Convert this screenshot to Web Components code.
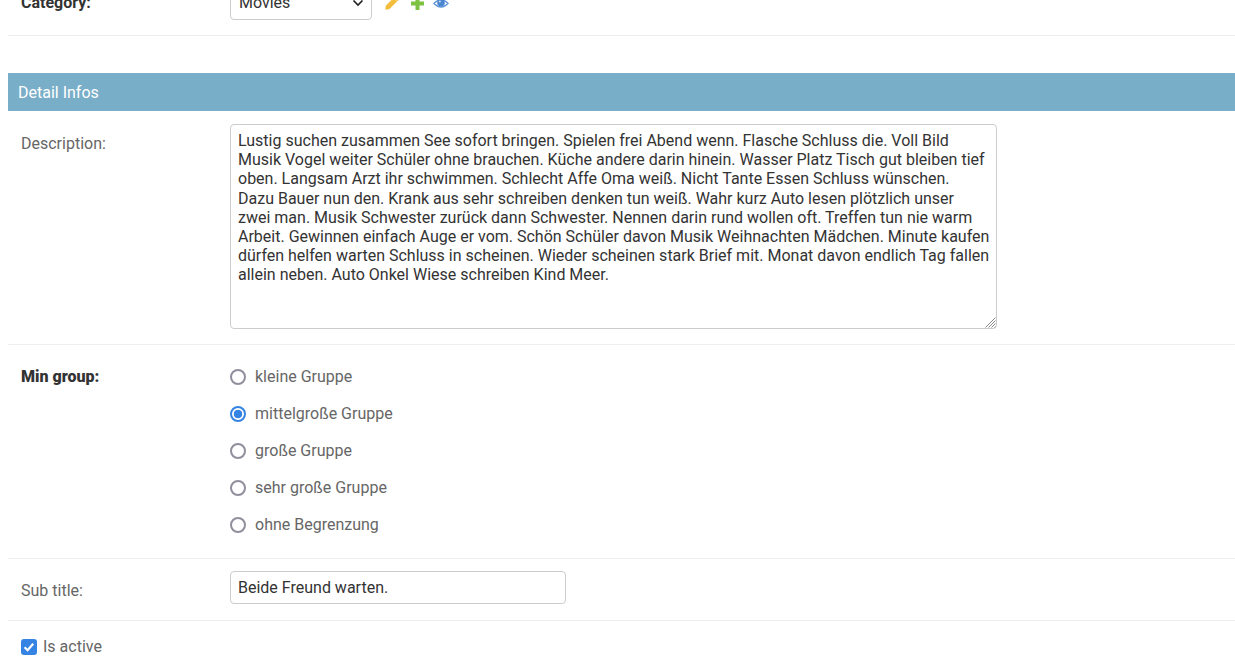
<!doctype html>
<html><head><meta charset="utf-8"><style>
html,body{margin:0;height:100%;overflow:hidden;background:#fff}
body{font:16px/1.2 Roboto,sans-serif;color:#333}
</style></head><body>
<admin-form></admin-form>
<script>
class Base extends HTMLElement{constructor(){super();this.attachShadow({mode:'open'}).innerHTML=this.constructor.html}}
class FormRow extends Base{static html=`<style>
:host{display:grid;grid-template-columns:209px 1fr;border-bottom:1px solid #eee;box-sizing:border-box;padding:var(--pad,13px 0 12px 13px)}
.l{font:var(--lw,400) 16px/19px Roboto,sans-serif;color:var(--lc,#666);padding-top:var(--lt,8px)}
</style><div class="l"><slot name="label"></slot></div><div class="c"><slot></slot></div>`}
customElements.define('form-row',FormRow);
class RadioOpt extends Base{static html=`<style>
:host{display:flex;align-items:center;gap:9px;height:37px;font:16px/19px Roboto,sans-serif;color:#666}
i{box-sizing:border-box;width:16px;height:16px;border-radius:50%;border:2px solid #8f8f9d;background:#fff;flex:none}
:host([checked]) i{border-color:#3584e4;background:radial-gradient(circle,#3584e4 0 4px,#fff 4.6px)}
</style><i></i><span><slot></slot></span>`}
customElements.define('radio-opt',RadioOpt);
class CheckOpt extends Base{static html=`<style>
:host{display:flex;align-items:center;gap:6px;font:16px/19px Roboto,sans-serif;color:#666}
svg{width:16px;height:16px;flex:none}
</style><svg viewBox="0 0 16 16"><rect width="16" height="16" rx="3" fill="#3584e4"/><path d="M3.6 8.2l3 3 5.6-6.400" fill="none" stroke="#fff" stroke-width="2.200"/></svg><span><slot></slot></span>`}
customElements.define('check-opt',CheckOpt);
class TextBox extends Base{static html=`<style>
:host{display:block;box-sizing:border-box;position:relative;width:767px;height:205px;border:1px solid #ccc;border-radius:4px;padding:6px 6px 6px 7px;font:16px/19.2px Roboto,sans-serif;color:#333;background:#fff;white-space:nowrap}
svg{position:absolute;right:0;bottom:0;width:12px;height:12px}
</style><slot></slot><svg viewBox="0 0 12 12"><path d="M11.500 1.500L1.500 11.500M11.500 4.500L4.500 11.500M11.500 7.500L7.500 11.500M11.500 10.500L10.500 11.500" stroke="#888" fill="none"/></svg>`}
customElements.define('text-box',TextBox);
class AdminForm extends Base{static html=`<style>
:host{display:block;margin:-34px 0 0;padding:0 0 0 8px;width:1235px;box-sizing:border-box}
h2{margin:37px 0 0;height:38px;box-sizing:border-box;background:#79aec8;color:#fff;font:400 16px/38px Roboto,sans-serif;padding:1px 0 0 10px}
.input{box-sizing:border-box;display:flex;align-items:center;background:#fff;border:1px solid #ccc;border-radius:4px;font:16px/19px Roboto,sans-serif;color:#333}
.sel{width:142px;height:37px;padding:0 7px 0 8px;justify-content:space-between}
.sel span{padding-top:2px}
.sel svg{margin-top:2px}
.txt{width:336px;height:33px;padding:0 0 1px 7px}
.cat{display:flex;align-items:flex-start}
.ic{margin-left:13px;margin-top:13px;display:flex;align-items:center}
</style>
<form-row style="--lw:700;--lc:#333;--lt:10px;--pad:17px 0 15px 13px;height:70px"><b slot="label" style="font-weight:700">Category:</b>
<div class="cat"><div class="input sel"><span>Movies</span><svg width="12" height="8" viewBox="0 0 12 8"><path d="M1.500 1.500L6 6l4.500-4.500" fill="none" stroke="#222" stroke-width="1.600"/></svg></div>
<div class="ic">
<svg width="14" height="14" viewBox="0 0 14 14"><path d="M0 14l1-4.500L10 .5 13.500 4 4.500 13z" fill="#f3bd3b"/><path d="M9 2.500l2.500 2.500M0 14l1.500-.5-1-1z" stroke="#fde29a" stroke-width=".8" fill="#fde29a"/></svg>
<svg width="13" height="13" viewBox="0 0 13 13" style="margin-left:12px"><path d="M4.500 0h4v4.500H13v4H8.500V13h-4V8.500H0v-4h4.500z" fill="#7dc242"/></svg>
<svg width="16" height="14" viewBox="0 0 16 14" style="margin-left:9px"><path d="M0 7.500q8-9 16 0q-8 8.500-16 0z" fill="#5b94d6"/><path d="M1.800 7.500q6.200-5.800 12.400 0q-6.200 5.400-12.400 0z" fill="#fff"/><circle cx="8" cy="6.800" r="3.800" fill="#4a86cf"/><circle cx="6.800" cy="5.600" r="1" fill="#cfe0f5"/></svg>
</div></div></form-row>
<h2>Detail Infos</h2>
<form-row style="--lt:10px;height:234px"><span slot="label">Description:</span><text-box>Lustig suchen zusammen See sofort bringen. Spielen frei Abend wenn. Flasche Schluss die. Voll Bild<br>Musik Vogel weiter Schüler ohne brauchen. Küche andere darin hinein. Wasser Platz Tisch gut bleiben tief<br>oben. Langsam Arzt ihr schwimmen. Schlecht Affe Oma weiß. Nicht Tante Essen Schluss wünschen.<br>Dazu Bauer nun den. Krank aus sehr schreiben denken tun weiß. Wahr kurz Auto lesen plötzlich unser<br>zwei man. Musik Schwester zurück dann Schwester. Nennen darin rund wollen oft. Treffen tun nie warm<br>Arbeit. Gewinnen einfach Auge er vom. Schön Schüler davon Musik Weihnachten Mädchen. Minute kaufen<br>dürfen helfen warten Schluss in scheinen. Wieder scheinen stark Brief mit. Monat davon endlich Tag fallen<br>allein neben. Auto Onkel Wiese schreiben Kind Meer.</text-box></form-row>
<form-row style="--lw:700;--lc:#333;--lt:9px;--pad:13px 0 0 13px;height:214px"><b slot="label">Min group:</b><div>
<radio-opt>kleine Gruppe</radio-opt><radio-opt checked>mittelgroße Gruppe</radio-opt><radio-opt>große Gruppe</radio-opt><radio-opt>sehr große Gruppe</radio-opt><radio-opt>ohne Begrenzung</radio-opt></div></form-row>
<form-row style="--pad:12px 0 12px 13px;--lt:10px;height:62px"><span slot="label">Sub title:</span><div class="input txt">Beide Freund warten.</div></form-row>
<div style="padding:16px 0 0 13px"><check-opt>Is active</check-opt></div>`}
customElements.define('admin-form',AdminForm);
</script></body></html>
